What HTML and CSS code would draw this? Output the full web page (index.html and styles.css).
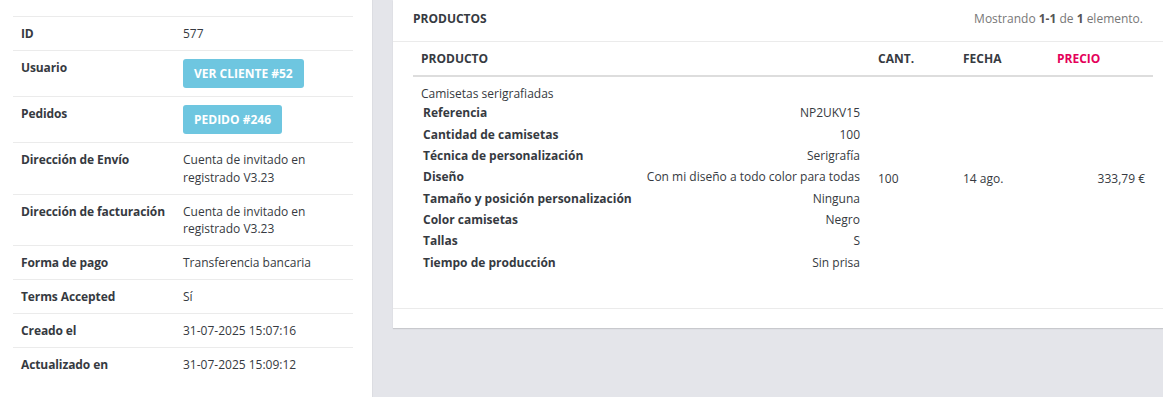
FILE: index.html
```html
<!DOCTYPE html>
<html lang="es">
<head>
  <meta charset="UTF-8">
  <title>Pedido #577</title>
  <meta name="viewport" content="width=device-width,initial-scale=1">
  <link rel="stylesheet" href="styles.css">
</head>
<body>
  <div class="layout">
    <!-- Detalle del pedido -->
    <aside class="side">
      <table class="detail">
        <colgroup><col class="c-label"><col></colgroup>
        <tr><th>ID</th><td>577</td></tr>
        <tr><th>Usuario</th><td><a class="btn-info" href="#">Ver cliente #52</a></td></tr>
        <tr><th>Pedidos</th><td><a class="btn-info" href="#">Pedido #246</a></td></tr>
        <tr><th>Dirección de Envío</th><td>Cuenta de invitado en registrado V3.23</td></tr>
        <tr><th>Dirección de facturación</th><td>Cuenta de invitado en registrado V3.23</td></tr>
        <tr><th>Forma de pago</th><td>Transferencia bancaria</td></tr>
        <tr><th>Terms Accepted</th><td>Sí</td></tr>
        <tr><th>Creado el</th><td>31-07-2025 15:07:16</td></tr>
        <tr><th>Actualizado en</th><td>31-07-2025 15:09:12</td></tr>
      </table>
    </aside>

    <!-- Productos -->
    <main class="main">
      <div class="card">
        <div class="card-head">
          <h3>Productos</h3>
          <div class="summary">Mostrando <b>1-1</b> de <b>1</b> elemento.</div>
        </div>
        <div class="card-body">
          <table class="grid">
            <colgroup>
              <col class="c-prod"><col class="c-qty"><col class="c-date"><col class="c-price">
            </colgroup>
            <thead>
              <tr>
                <th>Producto</th>
                <th>Cant.</th>
                <th>Fecha</th>
                <th class="sort"><a href="#">Precio</a></th>
              </tr>
            </thead>
            <tbody>
              <tr>
                <td class="prod">
                  Camisetas serigrafiadas
                  <table class="attrs">
                    <tr><th>Referencia</th><td>NP2UKV15</td></tr>
                    <tr><th>Cantidad de camisetas</th><td>100</td></tr>
                    <tr><th>Técnica de personalización</th><td>Serigrafía</td></tr>
                    <tr><th>Diseño</th><td>Con mi diseño a todo color para todas</td></tr>
                    <tr><th>Tamaño y posición personalización</th><td>Ninguna</td></tr>
                    <tr><th>Color camisetas</th><td>Negro</td></tr>
                    <tr><th>Tallas</th><td>S</td></tr>
                    <tr><th>Tiempo de producción</th><td>Sin prisa</td></tr>
                  </table>
                </td>
                <td>100</td>
                <td>14 ago.</td>
                <td class="price">333,79 €</td>
              </tr>
            </tbody>
          </table>
        </div>
        <div class="card-foot"></div>
      </div>
    </main>
  </div>
</body>
</html>
```

FILE: styles.css
```css
:root {
  --bg: #e4e5ea;
  --text: #363a41;
  --line: #ebebeb;
  --info: #6ec6e0;
  --accent: #e4005a;
}
* { box-sizing: border-box; margin: 0; padding: 0; }
html, body { height: 100%; }
body {
  font-family: "Open Sans", "Noto Sans", sans-serif;
  font-size: 12px; line-height: 1.42857;
  color: var(--text); background: var(--bg);
  overflow: hidden;
}
a { text-decoration: none; }
table { border-collapse: collapse; border-spacing: 0; }

.layout { display: flex; min-height: 100%; }

/* left detail panel */
.side {
  width: 373px; flex: none; background: #fff;
  border-right: 1px solid #dcdde2;
  padding: 16px 19px 0 13px;
}
.detail { width: 340px; table-layout: fixed; }
.detail .c-label { width: 162px; }
.detail th,
.detail td {
  padding: 8px; text-align: left; vertical-align: top;
  border-top: 1px solid var(--line);
}
.detail th { font-weight: 700; white-space: nowrap; letter-spacing: -0.1px; }
.btn-info {
  display: inline-block; background: var(--info); color: #fff;
  font-weight: 700; text-transform: uppercase;
  padding: 6px 11px; border-radius: 3px;
}

/* products card */
.main { flex: 1; padding-left: 20px; }
.card {
  background: #fff;
  box-shadow: 0 1px 1px rgba(0,0,0,0.12);
}
.card-head {
  display: flex; justify-content: space-between; align-items: center;
  padding: 10px 20px 14px;
  border-bottom: 1px solid var(--line);
}
.card-head h3 {
  font-size: 12px; font-weight: 700; text-transform: uppercase;
}
.summary { color: #777; }
.summary b { color: #555; }
.card-body { padding: 0 10px 27px 20px; }
.card-foot { height: 20px; border-top: 1px solid var(--line); }

.grid { width: 740px; table-layout: fixed; }
.grid .c-prod { width: 457px; }
.grid .c-qty { width: 85px; }
.grid .c-date { width: 94px; }
.grid .c-price { width: 104px; }
.grid thead th {
  text-align: left; font-weight: 700; text-transform: uppercase;
  padding: 8px; border-bottom: 2px solid #ddd;
}
.grid thead .sort a { color: var(--accent); }
.grid tbody td { padding: 8px; vertical-align: middle; }
.grid tbody td.prod { vertical-align: top; }
.grid tbody td.price { text-align: right; }

.grid .attrs { width: 100%; }
.grid .attrs th,
.grid .attrs td { padding: 2px; line-height: 17.3px; vertical-align: top; }
.grid .attrs th { text-align: left; font-weight: 700; white-space: nowrap; }
.grid .attrs td { text-align: right; white-space: nowrap; }
```
